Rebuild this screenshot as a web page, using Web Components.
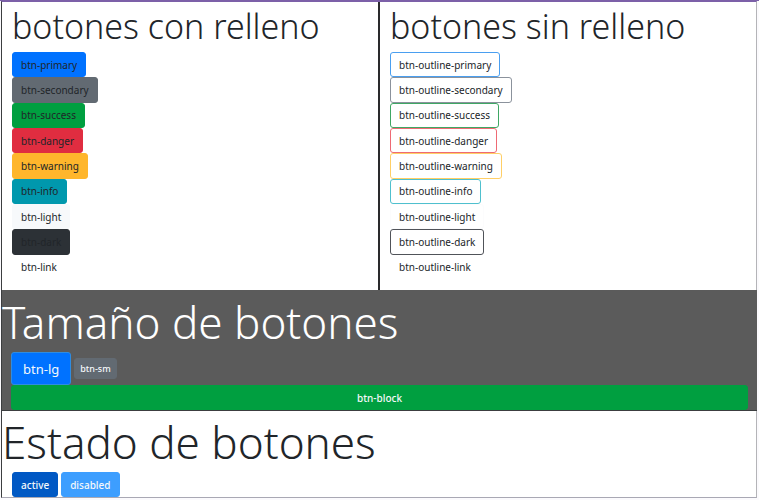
<!DOCTYPE html>
<html lang="es">
<head>
<meta charset="utf-8">
<title>Botones</title>
<style>
html, body { margin: 0; }
body { font-family: "Noto Sans", "Open Sans", sans-serif; color: #212529; background: #fff; }
</style>
</head>
<body>
<button-showcase></button-showcase>
<script>
const define = (name, html) => {
  const template = document.createElement('template');
  template.innerHTML = html;
  customElements.define(name, class extends HTMLElement {
    constructor() {
      super();
      this.attachShadow({ mode: 'open' }).append(template.content.cloneNode(true));
    }
  });
};

define('demo-button', `
<style>
:host { display: flex; --bg: transparent; --line: var(--bg); --ink: #212529; }
button { box-sizing: border-box; flex: 1; min-height: 25px; margin: 0; padding: 0 8px; font: inherit; font-size: 10px; line-height: 16px;
  color: var(--ink); background: var(--bg); border: 1px solid var(--line); border-radius: 3px; white-space: nowrap; }
:host([kind="primary"]) { --bg: #0072ff; }
:host([kind="secondary"]) { --bg: #626a72; }
:host([kind="success"]) { --bg: #009f40; }
:host([kind="danger"]) { --bg: #e02d40; }
:host([kind="warning"]) { --bg: #ffb62c; }
:host([kind="info"]) { --bg: #0098ad; }
:host([kind="light"]) { --bg: #f7f9fb; }
:host([kind="dark"]) { --bg: #2c3136; }
:host([kind="active"]) { --bg: #0058c4; }
:host([kind="disabled"]) { --bg: #3d9eff; }
:host([outline]) { --bg: transparent; }
:host([outline="primary"]) { --line: #4a9ff0; }
:host([outline="secondary"]) { --line: #8b929c; }
:host([outline="success"]) { --line: #3fa764; }
:host([outline="danger"]) { --line: #ee6a74; }
:host([outline="warning"]) { --line: #ffcf66; }
:host([outline="info"]) { --line: #4fc0ce; }
:host([outline="light"]) { --line: #fcfcfd; }
:host([outline="dark"]) { --line: #505359; }
:host([light-text]) { --ink: #f4f8fb; }
:host([light-text]) button { font-weight: 500; }
:host([size="lg"]) { --line: #2f8ce0; }
:host([size="lg"]) button { min-height: 33px; padding: 0 11px; font-size: 13px; font-weight: 400; }
:host([size="sm"]) button { min-height: 21px; padding: 0 5px; font-size: 9px; line-height: 14px; }
</style>
<button type="button"><slot></slot></button>`);

define('button-list', `
<style>
:host { flex: 1; display: grid; grid-auto-rows: minmax(25px, 1fr); justify-items: start; }
</style>
<slot></slot>`);

define('demo-panel', `
<style>
:host { display: flex; flex-direction: column; box-sizing: border-box; padding: 0 10px 10px; }
h2 { margin: 0 0 2px; font-size: 34px; line-height: 48px; font-weight: 300; white-space: nowrap; }
</style>
<h2><slot name="title"></slot></h2>
<slot></slot>`);

define('demo-band', `
<style>
:host { display: block; border-top: 1px solid #3c3e40; }
:host([dark]) { background: #5b5b5b; color: #fff; border-top-color: #5b5b5b; }
h1 { margin: 0; padding-top: 1px; font-size: 44px; line-height: 60px; font-weight: 300; white-space: nowrap; }
.body { padding: 0 10px; }
:host([dark]) .body { padding: 0 9px; }
</style>
<h1><slot name="title"></slot></h1>
<div class="body"><slot></slot></div>`);

define('button-row', `
<style>
:host { display: flex; align-items: center; gap: 3px; }
</style>
<slot></slot>`);

define('button-showcase', `
<style>
:host { display: flex; flex-direction: column; box-sizing: border-box; min-height: 100vh; border-top: 1px solid #7c60a8; background: #fbfafd; padding: 0 2px 2px 1px; }
main { flex: 1; display: flex; flex-direction: column; background: #fff; border: 1px solid #3c3e40; border-right-color: #b4b4b8; border-bottom-color: #a9a8b4; border-top-color: #7c60a8; }
.pair { flex: 1; display: grid; grid-template-columns: 1fr 1fr; }
.pair > :first-child { border-right: 1px solid #2a2a2c; }
.pair > :last-child { border-left: 1px solid #2a2a2c; }
demo-band { margin: 0 -1px 0 0; }
</style>
<main>
  <div class="pair">
    <demo-panel><span slot="title">botones con relleno</span>
      <button-list>
        <demo-button kind="primary">btn-primary</demo-button>
        <demo-button kind="secondary">btn-secondary</demo-button>
        <demo-button kind="success">btn-success</demo-button>
        <demo-button kind="danger">btn-danger</demo-button>
        <demo-button kind="warning">btn-warning</demo-button>
        <demo-button kind="info">btn-info</demo-button>
        <demo-button kind="light">btn-light</demo-button>
        <demo-button kind="dark">btn-dark</demo-button>
        <demo-button>btn-link</demo-button>
      </button-list>
    </demo-panel>
    <demo-panel><span slot="title">botones sin relleno</span>
      <button-list>
        <demo-button outline="primary">btn-outline-primary</demo-button>
        <demo-button outline="secondary">btn-outline-secondary</demo-button>
        <demo-button outline="success">btn-outline-success</demo-button>
        <demo-button outline="danger">btn-outline-danger</demo-button>
        <demo-button outline="warning">btn-outline-warning</demo-button>
        <demo-button outline="info">btn-outline-info</demo-button>
        <demo-button outline="light">btn-outline-light</demo-button>
        <demo-button outline="dark">btn-outline-dark</demo-button>
        <demo-button>btn-outline-link</demo-button>
      </button-list>
    </demo-panel>
  </div>
  <demo-band dark><span slot="title">Tamaño de botones</span>
    <button-row>
      <demo-button kind="primary" size="lg" light-text>btn-lg</demo-button>
      <demo-button kind="secondary" size="sm" light-text>btn-sm</demo-button>
    </button-row>
    <demo-button kind="success" light-text>btn-block</demo-button>
  </demo-band>
  <demo-band><span slot="title">Estado de botones</span>
    <button-row>
      <demo-button kind="active" light-text>active</demo-button>
      <demo-button kind="disabled" light-text>disabled</demo-button>
    </button-row>
  </demo-band>
</main>`);
</script>
</body>
</html>
